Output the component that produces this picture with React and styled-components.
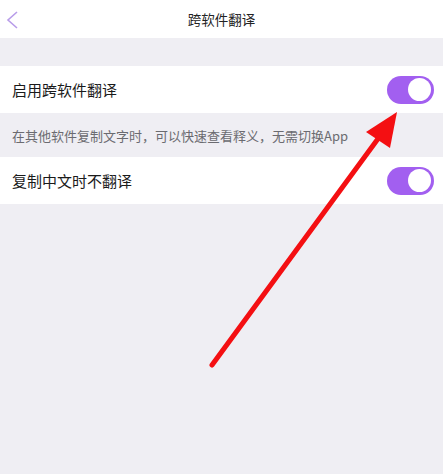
import React, { useState } from "react";
import styled, { createGlobalStyle } from "styled-components";

const GlobalStyle = createGlobalStyle`
  html, body {
    margin: 0;
    padding: 0;
    background: #efeef3;
    font-family: "Noto Sans CJK SC", "Noto Sans", sans-serif;
  }
`;

const Page = styled.div`
  position: relative;
  width: 443px;
  height: 474px;
  overflow: hidden;
  background: #efeef3;
  display: flex;
  flex-direction: column;
`;

const NavBar = styled.div`
  height: 38px;
  background: #ffffff;
  display: flex;
  align-items: center;
  justify-content: center;
  position: relative;
`;

const BackButton = styled.button`
  position: absolute;
  left: 5px;
  top: 10px;
  border: none;
  background: transparent;
  padding: 0;
  width: 16px;
  height: 20px;
  cursor: pointer;
`;

const NavTitle = styled.h1`
  margin: 0;
  font-size: 13.5px;
  font-weight: 400;
  color: #222;
`;

const Spacer = styled.div`
  height: ${(p) => p.h}px;
`;

const Row = styled.div`
  height: 47px;
  background: #ffffff;
  display: flex;
  align-items: center;
  justify-content: space-between;
  padding: 0 9px 0 12px;
`;

const RowLabel = styled.span`
  font-size: 15px;
  color: #1a1a1a;
`;

const Note = styled.p`
  margin: 0;
  height: 44px;
  display: flex;
  align-items: center;
  padding: 0 12px;
  font-size: 13px;
  color: #6b6b70;
`;

const Switch = styled.button`
  width: 47px;
  height: 28px;
  border-radius: 14px;
  border: none;
  padding: 0;
  background: ${(p) => (p.on ? "#a25ff0" : "#e3e3e8")};
  display: flex;
  align-items: center;
  justify-content: ${(p) => (p.on ? "flex-end" : "flex-start")};
  cursor: pointer;
`;

const Knob = styled.span`
  width: 23px;
  height: 23px;
  margin: 0 3px;
  border-radius: 50%;
  background: #ffffff;
`;

const Arrow = styled.svg`
  position: absolute;
  left: 0;
  top: 0;
  pointer-events: none;
`;

function Toggle({ on, onChange }) {
  return (
    <Switch on={on} onClick={() => onChange(!on)}>
      <Knob />
    </Switch>
  );
}

export default function App() {
  const [crossApp, setCrossApp] = useState(true);
  const [skipChinese, setSkipChinese] = useState(true);

  return (
    <>
      <GlobalStyle />
      <Page>
        <NavBar>
          <BackButton aria-label="返回">
            <svg width="16" height="20" viewBox="0 0 16 20">
              <path d="M12 2 L3 10 L12 18" fill="none" stroke="#b89ce9" strokeWidth="1.6" />
            </svg>
          </BackButton>
          <NavTitle>跨软件翻译</NavTitle>
        </NavBar>
        <Spacer h={28} />
        <Row>
          <RowLabel>启用跨软件翻译</RowLabel>
          <Toggle on={crossApp} onChange={setCrossApp} />
        </Row>
        <Note>在其他软件复制文字时，可以快速查看释义，无需切换App</Note>
        <Row>
          <RowLabel>复制中文时不翻译</RowLabel>
          <Toggle on={skipChinese} onChange={setSkipChinese} />
        </Row>

        {/* red pointer arrow */}
        <Arrow width="443" height="474" viewBox="0 0 443 474">
          <line x1="212" y1="365" x2="380" y2="136" stroke="#f40f12" strokeWidth="5" strokeLinecap="round" />
          <polygon points="397,112 366,132 390,148" fill="#f40f12" />
        </Arrow>
      </Page>
    </>
  );
}
